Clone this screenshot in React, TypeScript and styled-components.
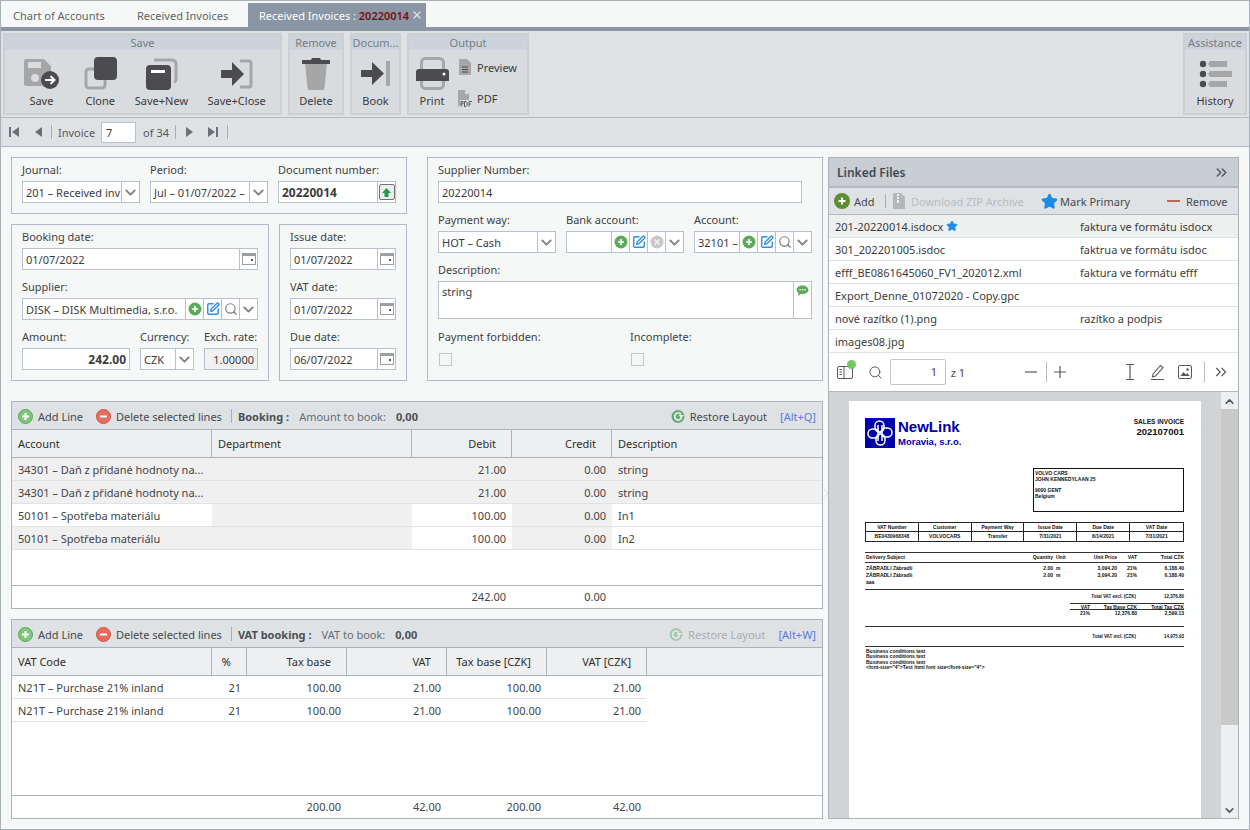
import * as React from 'react';
import styled, { createGlobalStyle } from 'styled-components';
import { ChevronDown, ChevronsRight, Search, SquarePen, Star, X } from 'lucide-react';

const GlobalStyle = createGlobalStyle`
  html, body { margin: 0; padding: 0; background: #f6f8f8; }
  body { font-family: "Noto Sans", "Open Sans", sans-serif; font-size: 11px; color: #3c3c3c; }
  * { box-sizing: border-box; }
`;

/* icons */
const DARK = '#4c4c4e';
const GRAY = '#a6a6a6';

const SaveIcon = () => (
  <svg width="36" height="30" viewBox="0 0 36 30">
    <path d="M3 0h18l7 7v18a2 2 0 0 1-2 2H3a2 2 0 0 1-2-2V2a2 2 0 0 1 2-2z" fill={GRAY} />
    <rect x="5" y="3" width="13" height="6" fill="#d9dcdf" />
    <circle cx="12" cy="19" r="4" fill="#d9dcdf" />
    <circle cx="27" cy="21" r="9" fill={DARK} />
    <path d="M22 21h9M27.500 17l4 4-4 4" fill="none" stroke="#fff" strokeWidth="2" />
  </svg>
);
const CloneIcon = () => (
  <svg width="33" height="33" viewBox="0 0 33 33">
    <rect x="2" y="12" width="19" height="19" rx="3" fill="none" stroke={GRAY} strokeWidth="3" />
    <rect x="10" y="0" width="23" height="23" rx="4" fill={DARK} />
  </svg>
);
const SaveNewIcon = () => (
  <svg width="33" height="33" viewBox="0 0 33 33">
    <path d="M9 3h18a4 4 0 0 1 4 4v15a3 3 0 0 1-2 3" fill="none" stroke={GRAY} strokeWidth="3" />
    <rect x="1" y="8" width="25" height="25" rx="4" fill={DARK} />
    <rect x="6" y="13" width="14" height="3" fill="#fff" />
  </svg>
);
const SaveCloseIcon = () => (
  <svg width="33" height="30" viewBox="0 0 33 30">
    <path d="M20 2h9a2 2 0 0 1 2 2v22a2 2 0 0 1-2 2h-9" fill="none" stroke={GRAY} strokeWidth="3" />
    <path d="M1 11h11V3l12 12-12 12v-8H1z" fill={DARK} />
  </svg>
);
const TrashIcon = () => (
  <svg width="28" height="33" viewBox="0 0 28 33">
    <path d="M3 6h22l-2.500 25a2 2 0 0 1-2 2h-13a2 2 0 0 1-2-2z" fill={GRAY} />
    <path d="M1 3h8l1-2h8l1 2h8a1 1 0 0 1 0 4H1a1 1 0 0 1 0-4z" fill={DARK} />
  </svg>
);
const BookIcon = () => (
  <svg width="29" height="25" viewBox="0 0 29 25">
    <rect x="25" y="0" width="4" height="25" rx="1" fill={GRAY} />
    <path d="M0 9h11V1l12 11.500L11 24v-8H0z" fill={DARK} />
  </svg>
);
const PrintIcon = () => (
  <svg width="33" height="33" viewBox="0 0 33 33">
    <rect x="5.500" y="1.500" width="22" height="30" rx="4" fill="none" stroke={GRAY} strokeWidth="3" />
    <path d="M3 12h27a3 3 0 0 1 3 3v9H0v-9a3 3 0 0 1 3-3z" fill={DARK} />
    <circle cx="28" cy="17" r="1.500" fill="#fff" />
  </svg>
);
const DocIcon = () => (
  <svg width="12" height="16" viewBox="0 0 12 16">
    <path d="M1 0h7l4 4v11a1 1 0 0 1-1 1H1a1 1 0 0 1-1-1V1a1 1 0 0 1 1-1z" fill={GRAY} />
    <path d="M3 8h6M3 10.500h6M3 13h6" stroke={DARK} strokeWidth="1" />
  </svg>
);
const PdfIcon = () => (
  <svg width="16" height="17" viewBox="0 0 16 17">
    <path d="M1 0h7l4 4v12H1z" fill={GRAY} />
    <path d="M8 0v4h4" fill="#d9dcdf" />
    <rect x="3" y="10" width="13" height="7" fill="#d9dcdf" />
    <path d="M4 16.500v-5h2v2.500H4M7.500 11.500v5h1.500l1-1v-3l-1-1zM12 16.500v-5h3M12 14h2" fill="none" stroke={DARK} strokeWidth="0.9" />
  </svg>
);
const HistoryIcon = () => (
  <svg width="33" height="28" viewBox="0 0 33 28">
    <circle cx="4" cy="4" r="3.200" fill={DARK} />
    <circle cx="4" cy="14" r="3.200" fill={DARK} />
    <circle cx="4" cy="24" r="3.200" fill={DARK} />
    <path d="M11 1h17v6H11l-2-3zM11 11h22v6H11l-2-3zM11 21h17v6H11l-2-3z" fill={GRAY} />
  </svg>
);
const First = () => (
  <svg width="12" height="12" viewBox="0 0 12 12"><rect x="1" y="1" width="2" height="10" fill="#6b7076" /><path d="M11 1v10L4 6z" fill="#6b7076" /></svg>
);
const Prev = () => (
  <svg width="12" height="12" viewBox="0 0 12 12"><path d="M9 1v10L2 6z" fill="#6b7076" /></svg>
);
const Next = () => (
  <svg width="12" height="12" viewBox="0 0 12 12"><path d="M3 1v10l7-5z" fill="#6b7076" /></svg>
);
const Last = () => (
  <svg width="12" height="12" viewBox="0 0 12 12"><rect x="9" y="1" width="2" height="10" fill="#6b7076" /><path d="M1 1v10l7-5z" fill="#6b7076" /></svg>
);
const Chevron = () => <ChevronDown size={17} color="#7b8084" strokeWidth={2.6} />;
const AddDot = () => (
  <svg width="14" height="14" viewBox="0 0 14 14">
    <circle cx="7" cy="7" r="6.500" fill="#5cab5c" />
    <path d="M7 4v6M4 7h6" stroke="#fff" strokeWidth="1.600" />
  </svg>
);
const Edit = () => <SquarePen size={14} color="#2f8fe8" strokeWidth={2.4} />;
const Find = () => <Search size={14} color="#777b80" strokeWidth={2} />;
const Clear = () => (
  <svg width="14" height="14" viewBox="0 0 14 14">
    <circle cx="7" cy="7" r="6.500" fill="#c6c8ca" />
    <path d="M4.500 4.500l5 5M9.500 4.500l-5 5" stroke="#f4f4f4" strokeWidth="1.400" />
  </svg>
);
const Calendar = () => (
  <svg width="14" height="12" viewBox="0 0 14 12">
    <rect x="0.500" y="0.500" width="13" height="11" fill="#fff" stroke="#9a9fa4" />
    <rect x="0.500" y="0.500" width="13" height="2.500" fill="#9a9fa4" />
    <rect x="9" y="6" width="2" height="2" fill="#55595d" />
  </svg>
);
const UpArrow = () => (
  <svg width="11" height="11" viewBox="0 0 11 11"><path d="M5.500 1L10 6H7.500v4h-4V6H1z" fill="#1f9d4d" /></svg>
);
const Bubble = () => (
  <svg width="13" height="12" viewBox="0 0 13 12">
    <path d="M6.500 0.500c3.300 0 6 1.900 6 4.300s-2.700 4.300-6 4.300c-.6 0-1.100-.1-1.600-.2L2 11l.5-3C1.300 7.200.5 6.100.5 4.800.5 2.400 3.200.5 6.500.5z" fill="#5cab5c" />
    <circle cx="4" cy="4.800" r=".8" fill="#fff" /><circle cx="6.500" cy="4.800" r=".8" fill="#fff" /><circle cx="9" cy="4.800" r=".8" fill="#fff" />
  </svg>
);
const AddLineIcon = () => (
  <svg width="15" height="15" viewBox="0 0 15 15">
    <circle cx="7.500" cy="7.500" r="7" fill="#7fc77b" stroke="#5fa35c" />
    <path d="M7.500 4v7M4 7.500h7" stroke="#fff" strokeWidth="2" />
  </svg>
);
const DeleteLineIcon = () => (
  <svg width="15" height="15" viewBox="0 0 15 15">
    <circle cx="7.500" cy="7.500" r="7" fill="#ea6a5c" stroke="#cc5648" />
    <path d="M4 7.500h7" stroke="#fff" strokeWidth="2" />
  </svg>
);
const RestoreIcon = ({ faded }: { faded?: boolean }) => (
  <svg width="14" height="15" viewBox="0 0 14 15" opacity={faded ? 0.45 : 1}>
    <circle cx="7" cy="7.500" r="6.500" fill="#69a777" />
    <path d="M10 5.500A3.500 3.500 0 1 0 10.500 8.500" fill="none" stroke="#e9f3ea" strokeWidth="1.700" />
    <path d="M7.500 6H13l-2.800 3.200z" fill="#e9f3ea" />
  </svg>
);
const BigAdd = () => (
  <svg width="16" height="16" viewBox="0 0 16 16">
    <circle cx="8" cy="8" r="8" fill="#5c8f2e" />
    <path d="M8 4.500v7M4.500 8h7" stroke="#fff" strokeWidth="2" />
  </svg>
);
const ZipIcon = () => (
  <svg width="12" height="16" viewBox="0 0 12 16">
    <path d="M1 0h7l4 4v12H0V1z" fill="#b4b7ba" />
    <path d="M4 1h2v2H4zM4 4h2v2H4zM4 7h2v3H4z" fill="#eceeef" />
  </svg>
);
const SidebarIcon = () => (
  <svg width="16" height="13" viewBox="0 0 16 13">
    <rect x="0.500" y="0.500" width="15" height="12" rx="1.500" fill="none" stroke="#55595d" />
    <path d="M7 .5v12M2.500 3.500h2.500M2.500 6h2.500M2.500 8.500h2.500" stroke="#55595d" fill="none" />
  </svg>
);
const IBeam = () => (
  <svg width="10" height="16" viewBox="0 0 10 16">
    <path d="M1 .5h8M1 15.500h8M5 .5v15" stroke="#55595d" strokeWidth="1.200" fill="none" />
  </svg>
);
const PenIcon = () => (
  <svg width="15" height="16" viewBox="0 0 15 16">
    <path d="M3 10L10.500 1.500l2.500 2-7.500 8.500-3 1zM1 15.500h13" fill="none" stroke="#55595d" strokeWidth="1.100" />
  </svg>
);
const ImageIcon = () => (
  <svg width="14" height="14" viewBox="0 0 14 14">
    <rect x="0.500" y="0.500" width="13" height="13" rx="1.500" fill="#fff" stroke="#55595d" />
    <path d="M2.500 11l3-4 2.500 2.500 1.500-1.500 2 3z" fill="#55595d" />
    <circle cx="9.500" cy="4.500" r="1.200" fill="#55595d" />
  </svg>
);
const PlainMinus = () => (
  <svg width="12" height="12" viewBox="0 0 12 12"><path d="M0 6h12" stroke="#55595d" strokeWidth="1.200" /></svg>
);
const PlainPlus = () => (
  <svg width="12" height="12" viewBox="0 0 12 12"><path d="M0 6h12M6 0v12" stroke="#55595d" strokeWidth="1.200" /></svg>
);
const KnotLogo = () => (
  <svg width="30" height="30" viewBox="0 0 30 30">
    <rect width="30" height="30" fill="#0000a8" />
    <g fill="none" stroke="#fff" strokeWidth="1.500">
      <rect x="3" y="11" width="11" height="9" rx="4.500" />
      <rect x="16" y="10" width="11" height="9" rx="4.500" />
      <rect x="10" y="3" width="9" height="11" rx="4.500" />
      <rect x="11" y="16" width="9" height="11" rx="4.500" />
      <path d="M13 7v16M17 7v16" />
    </g>
  </svg>
);

/* page frame */
const Window = styled.div`
  width: 1250px;
  height: 830px;
  border: 1px solid #a9b1b9;
  display: flex;
  flex-direction: column;
  overflow: hidden;
  background: #f6f8f8;
`;

const TabStrip = styled.div`
  height: 26px;
  display: flex;
  align-items: flex-end;
  flex-shrink: 0;
  padding-left: 1px;
`;

const Tab = styled.div<{ $w: number; $active?: boolean }>`
  width: ${p => p.$w}px;
  height: 24px;
  display: flex;
  align-items: center;
  justify-content: space-between;
  padding: 0 3px 0 11px;
  white-space: nowrap;
  color: ${p => (p.$active ? '#fff' : '#5d6469')};
  background: ${p => (p.$active ? '#8a96a3' : 'transparent')};
`;

const TabNumber = styled.span`
  color: #7a0c12;
  font-weight: 600;
`;

const TabRule = styled.div`
  height: 4px;
  flex-shrink: 0;
  background: #8a96a3;
`;

const Ribbon = styled.div`
  height: 87px;
  flex-shrink: 0;
  display: flex;
  gap: 6px;
  padding: 2px 2px 0;
  background: #dfe2e5;
  border-bottom: 1px solid #b5babf;
`;

const Group = styled.section<{ $w: number; $push?: boolean }>`
  width: ${p => p.$w}px;
  height: 82px;
  margin-left: ${p => (p.$push ? 'auto' : '0')};
  border: 2px solid #cdd0d2;
  background: #d9dcdf;
  display: flex;
  flex-direction: column;
`;

const GroupTitle = styled.div`
  height: 15px;
  line-height: 15px;
  flex-shrink: 0;
  text-align: center;
  color: #757c83;
  background: #ccd3da;
  white-space: nowrap;
  overflow: hidden;
`;

const GroupBody = styled.div<{ $pad?: number }>`
  flex: 1;
  display: flex;
  padding-left: ${p => p.$pad ?? 0}px;
`;

const BigButton = styled.div<{ $w: number }>`
  width: ${p => p.$w}px;
  display: flex;
  flex-direction: column;
  align-items: center;
  color: #3a3a3c;
`;

const BigIcon = styled.div`
  height: 39px;
  margin-top: 4px;
  display: flex;
  align-items: center;
  justify-content: center;
`;

const BigLabel = styled.div`
  height: 16px;
  line-height: 16px;
  white-space: nowrap;
`;

const SideStack = styled.div`
  display: flex;
  flex-direction: column;
  gap: 13px;
  padding: 8px 0 0 4px;
`;

const SmallButton = styled.div`
  display: flex;
  align-items: center;
  gap: 4px;
  height: 18px;
  color: #3a3a3c;
`;

const SmallIcon = styled.div`
  width: 16px;
  display: flex;
  justify-content: center;
`;

const NavBar = styled.div`
  height: 29px;
  flex-shrink: 0;
  display: flex;
  align-items: center;
  background: #dfe2e5;
  border-bottom: 1px solid #b0b7be;
  color: #55595d;
`;

const NavIcon = styled.div<{ $w: number }>`
  width: ${p => p.$w}px;
  display: flex;
  justify-content: center;
`;

const NavRule = styled.div<{ $left?: number }>`
  width: 1px;
  height: 14px;
  margin-left: ${p => p.$left ?? 0}px;
  background: #a8aeb4;
`;

const NavInput = styled.div`
  width: 35px;
  height: 21px;
  line-height: 19px;
  margin: 0 7px 0 6px;
  padding-left: 4px;
  background: #fff;
  border: 1px solid #b9c0cb;
  color: #3c3c3c;
`;

const Main = styled.main`
  flex: 1;
  min-height: 0;
  display: flex;
  padding: 10px;
`;

const LeftColumn = styled.div`
  width: 812px;
  display: flex;
  flex-direction: column;
`;

const FormRow = styled.div`
  display: flex;
  gap: 20px;
  margin-bottom: 20px;
`;

const FormStack = styled.div`
  width: 396px;
  display: flex;
  flex-direction: column;
  gap: 10px;
`;

const DateRow = styled.div`
  display: flex;
  gap: 10px;
`;

const Panel = styled.div<{ $w?: number; $cols?: string }>`
  width: ${p => (p.$w ? `${p.$w}px` : 'auto')};
  border: 1px solid #b4b9c8;
  padding: 5px 10px 10px;
  display: grid;
  grid-template-columns: ${p => p.$cols ?? '1fr'};
  gap: 10px;
  align-content: start;
`;

const FieldWrap = styled.div<{ $span?: number; $w?: number }>`
  grid-column: span ${p => p.$span ?? 1};
  width: ${p => (p.$w ? `${p.$w}px` : 'auto')};
  min-width: 0;
`;

const Label = styled.div`
  height: 18px;
  line-height: 14px;
  color: #3f3f3f;
  white-space: nowrap;
`;

const Box = styled.div<{ $h?: number; $w?: number; $gray?: boolean }>`
  height: ${p => p.$h ?? 22}px;
  width: ${p => (p.$w ? `${p.$w}px` : 'auto')};
  display: flex;
  background: ${p => (p.$gray ? '#f0f1f1' : '#fff')};
  border: 1px solid #b9c0cb;
`;

const BoxText = styled.div<{ $bold?: boolean; $right?: boolean; $top?: boolean }>`
  flex: 1;
  min-width: 0;
  padding: ${p => (p.$top ? '1px 3px' : '0 3px')};
  line-height: ${p => (p.$top ? '17px' : '21px')};
  font-size: ${p => (p.$bold ? 12 : 11)}px;
  font-weight: ${p => (p.$bold ? 700 : 400)};
  text-align: ${p => (p.$right ? 'right' : 'left')};
  white-space: nowrap;
  overflow: hidden;
  color: #3c3c3c;
`;

const BoxButton = styled.div<{ $w?: number; $top?: boolean }>`
  width: ${p => p.$w ?? 18}px;
  flex-shrink: 0;
  display: flex;
  justify-content: center;
  align-items: ${p => (p.$top ? 'flex-start' : 'center')};
  padding-top: ${p => (p.$top ? 3 : 0)}px;
  border-left: 1px solid #b9c0cb;
`;

const RaisedKey = styled.div`
  width: 16px;
  height: 16px;
  display: flex;
  align-items: center;
  justify-content: center;
  border: 1px solid #6f7478;
  border-radius: 2px;
  background: #eceeef;
`;

const CheckRow = styled.div`
  display: flex;
  margin-top: 5px;
`;

const CheckBox = styled.div`
  width: 13px;
  height: 13px;
  margin-left: 1px;
  border: 1px solid #c4c7ca;
`;

const FlagRow = styled.div`
  display: flex;
  margin-top: 1px;
`;

/* data grids */
const GridPanel = styled.section<{ $fill?: boolean }>`
  display: flex;
  flex-direction: column;
  height: ${p => (p.$fill ? 'auto' : '208px')};
  flex: ${p => (p.$fill ? 1 : 'none')};
  margin-bottom: ${p => (p.$fill ? 0 : 10)}px;
  border: 1px solid #aab2ba;
  background: #fff;
`;

const GridBar = styled.div`
  height: 28px;
  flex-shrink: 0;
  display: flex;
  align-items: center;
  padding: 1px 6px 0;
  background: #dfe2e5;
  border-bottom: 1px solid #aab2ba;
  color: #46494d;
`;

const BarAction = styled.div<{ $gap?: number; $faded?: boolean }>`
  display: flex;
  align-items: center;
  gap: 5px;
  margin-right: ${p => p.$gap ?? 0}px;
  white-space: nowrap;
  color: ${p => (p.$faded ? '#a9adb2' : '#46494d')};
`;

const BarRule = styled.div`
  width: 1px;
  height: 14px;
  margin: 0 6px 0 9px;
  background: #a8aeb4;
`;

const BarBold = styled.b<{ $gap: number }>`
  margin-right: ${p => p.$gap}px;
  font-weight: 700;
  color: #4c5054;
  white-space: nowrap;
`;

const BarMuted = styled.span`
  margin-right: 10px;
  color: #686c70;
  white-space: nowrap;
`;

const BarPush = styled.div`
  flex: 1;
`;

const Shortcut = styled.span`
  margin-left: 13px;
  color: #5a78e0;
  white-space: nowrap;
`;

const HeaderRow = styled.div`
  height: 28px;
  flex-shrink: 0;
  display: flex;
  background: #eeeff1;
  border-bottom: 1px solid #aab2ba;
`;

const HeaderCell = styled.div<{ $w?: number; $right?: boolean }>`
  width: ${p => (p.$w ? `${p.$w}px` : 'auto')};
  flex: ${p => (p.$w ? 'none' : 1)};
  line-height: 28px;
  padding: ${p => (p.$right ? '0 15px 0 6px' : '0 6px')};
  text-align: ${p => (p.$right ? 'right' : 'left')};
  color: #2e2e2e;
  border-right: ${p => (p.$w ? '1px solid #aab2ba' : 'none')};
  white-space: nowrap;
`;

const DataRow = styled.div<{ $w?: number }>`
  height: 23px;
  flex-shrink: 0;
  width: ${p => (p.$w ? `${p.$w}px` : 'auto')};
  display: flex;
  border-bottom: 1px solid #e0e2e6;
`;

const DataCell = styled.div<{ $w?: number; $right?: boolean; $shade?: boolean }>`
  width: ${p => (p.$w ? `${p.$w}px` : 'auto')};
  flex: ${p => (p.$w ? 'none' : 1)};
  line-height: 23px;
  padding: 0 6px;
  text-align: ${p => (p.$right ? 'right' : 'left')};
  background: ${p => (p.$shade ? '#f0f0f1' : 'transparent')};
  color: #444;
  white-space: nowrap;
  overflow: hidden;
`;

const GridSpace = styled.div`
  flex: 1;
`;

const FooterRow = styled.div`
  height: 23px;
  flex-shrink: 0;
  display: flex;
  border-top: 1px solid #aab2ba;
`;

const FooterCell = styled(DataCell)`
  line-height: 22px;
`;

const Splitter = styled.div`
  width: 5px;
  flex-shrink: 0;
  display: flex;
  align-items: flex-start;
  justify-content: center;
  padding-top: 332px;
  color: #dfe2e5;
`;

/* linked files */
const FilesPanel = styled.aside`
  width: 411px;
  display: flex;
  flex-direction: column;
  border: 1px solid #aab2ba;
  background: #fff;
`;

const FilesHeader = styled.div`
  height: 30px;
  flex-shrink: 0;
  display: flex;
  align-items: center;
  justify-content: space-between;
  padding: 0 8px;
  background: #c9ced2;
  border-bottom: 2px solid #b2b8bd;
  font-size: 12px;
  font-weight: 600;
  color: #3f4a55;
`;

const FilesBar = styled.div`
  height: 27px;
  flex-shrink: 0;
  display: flex;
  align-items: center;
  padding: 0 5px;
  background: #dfe2e5;
  border-bottom: 1px solid #b2b8bd;
  color: #46494d;
`;

const FilesAction = styled.div<{ $w: number; $faded?: boolean; $gap?: number }>`
  width: ${p => p.$w}px;
  flex-shrink: 0;
  display: flex;
  align-items: center;
  gap: ${p => p.$gap ?? 4}px;
  white-space: nowrap;
  color: ${p => (p.$faded ? '#b8bcc0' : '#46494d')};
`;

const BarRuleSmall = styled.div`
  width: 1px;
  height: 14px;
  margin-right: 7px;
  flex-shrink: 0;
  background: #a8aeb4;
`;

const RemoveDash = styled.div`
  width: 13px;
  height: 2px;
  margin-right: 2px;
  background: #c0654f;
`;

const FileRow = styled.div<{ $selected?: boolean }>`
  height: 23px;
  flex-shrink: 0;
  display: flex;
  align-items: center;
  padding-left: 6px;
  border-bottom: 1px solid #dfe2e6;
  background: ${p => (p.$selected ? '#eef0f0' : '#fff')};
  color: #3c3c3c;
`;

const FileName = styled.div`
  width: 245px;
  display: flex;
  align-items: center;
  gap: 3px;
  white-space: nowrap;
`;

const PdfBar = styled.div`
  height: 39px;
  flex-shrink: 0;
  display: flex;
  align-items: center;
  padding-left: 8px;
  border-bottom: 1px solid #b2b8bd;
  color: #46494d;
`;

const PdfTool = styled.div<{ $w: number }>`
  position: relative;
  width: ${p => p.$w}px;
  flex-shrink: 0;
  display: flex;
  justify-content: center;
  align-items: center;
`;

const GreenDot = styled.div`
  position: absolute;
  top: -6px;
  right: -3px;
  width: 9px;
  height: 9px;
  border-radius: 50%;
  background: #72c960;
`;

const PdfInput = styled.div`
  width: 56px;
  height: 26px;
  line-height: 24px;
  padding-right: 8px;
  text-align: right;
  border: 1px solid #c4c7ca;
  border-radius: 2px;
`;

const PdfRule = styled.div`
  width: 1px;
  height: 20px;
  flex-shrink: 0;
  background: #b9bdc1;
`;

const Viewer = styled.div`
  flex: 1;
  min-height: 0;
  display: flex;
  overflow: hidden;
`;

const ViewerCanvas = styled.div`
  flex: 1;
  min-width: 0;
  padding: 9px 0 0 20px;
  background: #d2d3d5;
  overflow: hidden;
`;

const ScrollBar = styled.div`
  width: 17px;
  flex-shrink: 0;
  display: flex;
  flex-direction: column;
  background: #eeeff0;
`;

const ScrollEnd = styled.div<{ $grow?: boolean }>`
  height: ${p => (p.$grow ? 'auto' : '17px')};
  flex: ${p => (p.$grow ? 1 : 'none')};
  display: flex;
  align-items: flex-end;
  justify-content: center;
  color: #55595d;
  padding-bottom: 1px;
`;

const ScrollThumb = styled.div`
  height: 316px;
  flex-shrink: 0;
  background: #c9c9c9;
`;

/* the invoice inside the viewer */
const Sheet = styled.div`
  width: 352px;
  height: 640px;
  padding: 17px 17px 0 16px;
  background: #fff;
  font-family: "Liberation Sans", Arial, sans-serif;
  font-size: 5px;
  font-weight: 700;
  color: #111;
  line-height: 7px;
`;

const SheetHead = styled.div`
  height: 30px;
  display: flex;
`;

const BrandText = styled.div`
  margin-left: 3px;
  color: #0000a8;
  font-size: 9.500px;
  line-height: 11px;
  font-weight: 700;
`;

const BrandName = styled.div`
  font-size: 15px;
  line-height: 18px;
`;

const SheetTitle = styled.div`
  margin-left: auto;
  text-align: right;
  font-size: 6.500px;
  line-height: 8px;
`;

const SheetNumber = styled.div`
  font-size: 9.500px;
  line-height: 11px;
`;

const AddressBox = styled.div`
  width: 151px;
  height: 44px;
  margin: 20px 0 10px auto;
  padding: 1px 1px;
  border: 1px solid #111;
  line-height: 6px;
`;

const AddressGap = styled.div`
  height: 5px;
`;

const InfoGrid = styled.div`
  display: grid;
  grid-template-columns: repeat(6, 1fr);
  margin-bottom: 10px;
  border: 1px solid #222;
`;

const InfoCell = styled.div`
  height: 9px;
  line-height: 8px;
  text-align: center;
  border-right: 1px solid #222;
  border-bottom: 1px solid #222;
  &:nth-child(6n) { border-right: none; }
  &:nth-child(n + 7) { border-bottom: none; }
`;

const LineGrid = styled.div<{ $head?: boolean }>`
  display: grid;
  grid-template-columns: 120px 68px 30px 34px 20px 47px;
  height: ${p => (p.$head ? '11px' : '7px')};
  line-height: ${p => (p.$head ? '9px' : '7px')};
  border-top: ${p => (p.$head ? '1px solid #333' : 'none')};
  border-bottom: ${p => (p.$head ? '1px solid #333' : 'none')};
  margin-bottom: ${p => (p.$head ? '2px' : '0')};
`;

const LineCell = styled.div<{ $right?: boolean; $pad?: boolean }>`
  text-align: ${p => (p.$right ? 'right' : 'left')};
  padding-left: ${p => (p.$pad ? 3 : 1)}px;
  white-space: nowrap;
`;

const SheetRule = styled.div<{ $top?: number }>`
  height: 1px;
  margin-top: ${p => p.$top ?? 0}px;
  background: #333;
`;

const TotalRow = styled.div<{ $h: number }>`
  height: ${p => p.$h}px;
  line-height: ${p => p.$h}px;
  display: flex;
  justify-content: flex-end;
  font-size: 4.500px;
`;

const TotalValue = styled.div`
  width: 48px;
  text-align: right;
`;

const TaxGrid = styled.div<{ $head?: boolean }>`
  width: 114px;
  margin-left: auto;
  display: grid;
  grid-template-columns: 20px 47px 47px;
  height: ${p => (p.$head ? '7px' : '6px')};
  line-height: 6px;
  text-align: right;
  border-top: ${p => (p.$head ? '1px solid #333' : 'none')};
  border-bottom: ${p => (p.$head ? '1px solid #333' : 'none')};
`;

const Conditions = styled.div`
  margin-top: 2px;
  padding-left: 1px;
  line-height: 5.400px;
`;

/* data */
const bookingCols = [200, 200, 100, 100];
const bookingRows = [
  { account: '34301 – Daň z přidané hodnoty na...', debit: '21.00', text: 'string', shade: [1, 1, 1, 1, 1] },
  { account: '34301 – Daň z přidané hodnoty na...', debit: '21.00', text: 'string', shade: [1, 1, 1, 1, 1] },
  { account: '50101 – Spotřeba materiálu', debit: '100.00', text: 'In1', shade: [0, 1, 0, 1, 0] },
  { account: '50101 – Spotřeba materiálu', debit: '100.00', text: 'In2', shade: [1, 1, 0, 1, 0] },
];
const files = [
  { name: '201-20220014.isdocx', note: 'faktura ve formátu isdocx', primary: true },
  { name: '301_202201005.isdoc', note: 'faktrua ve formátu isdoc' },
  { name: 'efff_BE0861645060_FV1_202012.xml', note: 'faktura ve formátu efff' },
  { name: 'Export_Denne_01072020 - Copy.gpc', note: '' },
  { name: 'nové razítko (1).png', note: 'razítko a podpis' },
  { name: 'images08.jpg', note: '' },
];
const infoCells = [
  'VAT Number', 'Customer', 'Payment Way', 'Issue Date', 'Due Date', 'VAT Date',
  'BE0430968348', 'VOLVOCARS', 'Transfer', '7/31/2021', '8/14/2021', '7/31/2021',
];

const DateField = ({ label, value }: { label: string; value: string }) => (
  <FieldWrap>
    <Label>{label}</Label>
    <Box>
      <BoxText>{value}</BoxText>
      <BoxButton><Calendar /></BoxButton>
    </Box>
  </FieldWrap>
);

const ComboField = ({ label, value }: { label: string; value: string }) => (
  <FieldWrap>
    <Label>{label}</Label>
    <Box>
      <BoxText>{value}</BoxText>
      <BoxButton><Chevron /></BoxButton>
    </Box>
  </FieldWrap>
);

const ForeignField = ({ label, value, middle }: { label: string; value: string; middle: React.ReactNode }) => (
  <FieldWrap>
    <Label>{label}</Label>
    <Box>
      <BoxText>{value}</BoxText>
      <BoxButton><AddDot /></BoxButton>
      <BoxButton><Edit /></BoxButton>
      <BoxButton>{middle}</BoxButton>
      <BoxButton><Chevron /></BoxButton>
    </Box>
  </FieldWrap>
);

const GridToolbar = ({ title, muted, shortcut, faded }: { title: string; muted: string; shortcut: string; faded?: boolean }) => (
  <GridBar>
    <BarAction $gap={13}><AddLineIcon />Add Line</BarAction>
    <BarAction><DeleteLineIcon />Delete selected lines</BarAction>
    <BarRule />
    <BarBold $gap={10}>{title}</BarBold>
    <BarMuted>{muted}</BarMuted>
    <BarBold $gap={0}>0,00</BarBold>
    <BarPush />
    <BarAction $faded={faded}><RestoreIcon faded={faded} />Restore Layout</BarAction>
    <Shortcut>{shortcut}</Shortcut>
  </GridBar>
);

const App: React.FC = () => (
  <>
    <GlobalStyle />
    <Window>
      <TabStrip>
        <Tab $w={124}>Chart of Accounts<X size={11} color="#fcfdfd" /></Tab>
        <Tab $w={122}>Received Invoices<X size={11} color="#fcfdfd" /></Tab>
        <Tab $w={178} $active>
          <span>Received Invoices : <TabNumber>20220014</TabNumber></span>
          <X size={12} color="#dfe3e7" strokeWidth={2.4} />
        </Tab>
      </TabStrip>
      <TabRule />

      <Ribbon>
        <Group $w={279}>
          <GroupTitle>Save</GroupTitle>
          <GroupBody $pad={7}>
            <BigButton $w={59}><BigIcon><SaveIcon /></BigIcon><BigLabel>Save</BigLabel></BigButton>
            <BigButton $w={59}><BigIcon><CloneIcon /></BigIcon><BigLabel>Clone</BigLabel></BigButton>
            <BigButton $w={64}><BigIcon><SaveNewIcon /></BigIcon><BigLabel>Save+New</BigLabel></BigButton>
            <BigButton $w={87}><BigIcon><SaveCloseIcon /></BigIcon><BigLabel>Save+Close</BigLabel></BigButton>
          </GroupBody>
        </Group>
        <Group $w={56}>
          <GroupTitle>Remove</GroupTitle>
          <GroupBody><BigButton $w={52}><BigIcon><TrashIcon /></BigIcon><BigLabel>Delete</BigLabel></BigButton></GroupBody>
        </Group>
        <Group $w={51}>
          <GroupTitle>Docum...</GroupTitle>
          <GroupBody><BigButton $w={47}><BigIcon><BookIcon /></BigIcon><BigLabel>Book</BigLabel></BigButton></GroupBody>
        </Group>
        <Group $w={122}>
          <GroupTitle>Output</GroupTitle>
          <GroupBody $pad={2}>
            <BigButton $w={42}><BigIcon><PrintIcon /></BigIcon><BigLabel>Print</BigLabel></BigButton>
            <SideStack>
              <SmallButton><SmallIcon><DocIcon /></SmallIcon>Preview</SmallButton>
              <SmallButton><SmallIcon><PdfIcon /></SmallIcon>PDF</SmallButton>
            </SideStack>
          </GroupBody>
        </Group>
        <Group $w={64} $push>
          <GroupTitle>Assistance</GroupTitle>
          <GroupBody><BigButton $w={60}><BigIcon><HistoryIcon /></BigIcon><BigLabel>History</BigLabel></BigButton></GroupBody>
        </Group>
      </Ribbon>

      <NavBar>
        <NavIcon $w={26}><First /></NavIcon>
        <NavIcon $w={24}><Prev /></NavIcon>
        <NavRule />
        <NavIcon $w={6} />
        Invoice
        <NavInput>7</NavInput>
        of 34
        <NavRule $left={6} />
        <NavIcon $w={26}><Next /></NavIcon>
        <NavIcon $w={22}><Last /></NavIcon>
        <NavRule $left={3} />
      </NavBar>

      <Main>
        <LeftColumn>
          <FormRow>
            <FormStack>
              <Panel $cols="118px 118px 118px">
                <ComboField label="Journal:" value="201 – Received inv" />
                <ComboField label="Period:" value="Jul – 01/07/2022 –" />
                <FieldWrap>
                  <Label>Document number:</Label>
                  <Box>
                    <BoxText $bold>20220014</BoxText>
                    <BoxButton><RaisedKey><UpArrow /></RaisedKey></BoxButton>
                  </Box>
                </FieldWrap>
              </Panel>
              <DateRow>
                <Panel $w={258} $cols="108px 54px 54px">
                  <FieldWrap $span={3}>
                    <Label>Booking date:</Label>
                    <Box>
                      <BoxText>01/07/2022</BoxText>
                      <BoxButton><Calendar /></BoxButton>
                    </Box>
                  </FieldWrap>
                  <FieldWrap $span={3}>
                    <Label>Supplier:</Label>
                    <Box>
                      <BoxText>DISK – DISK Multimedia, s.r.o.</BoxText>
                      <BoxButton><AddDot /></BoxButton>
                      <BoxButton><Edit /></BoxButton>
                      <BoxButton><Find /></BoxButton>
                      <BoxButton><Chevron /></BoxButton>
                    </Box>
                  </FieldWrap>
                  <FieldWrap>
                    <Label>Amount:</Label>
                    <Box><BoxText $bold $right>242.00</BoxText></Box>
                  </FieldWrap>
                  <ComboField label="Currency:" value="CZK" />
                  <FieldWrap>
                    <Label>Exch. rate:</Label>
                    <Box $gray><BoxText $right>1.00000</BoxText></Box>
                  </FieldWrap>
                </Panel>
                <Panel $w={128}>
                  <DateField label="Issue date:" value="01/07/2022" />
                  <DateField label="VAT date:" value="01/07/2022" />
                  <DateField label="Due date:" value="06/07/2022" />
                </Panel>
              </DateRow>
            </FormStack>

            <Panel $w={396} $cols="118px 118px 118px">
              <FieldWrap $span={3}>
                <Label>Supplier Number:</Label>
                <Box $w={364}><BoxText>20220014</BoxText></Box>
              </FieldWrap>
              <ComboField label="Payment way:" value="HOT – Cash" />
              <ForeignField label="Bank account:" value="" middle={<Clear />} />
              <ForeignField label="Account:" value="32101 –" middle={<Find />} />
              <FieldWrap $span={3}>
                <Label>Description:</Label>
                <Box $h={38}>
                  <BoxText $top>string</BoxText>
                  <BoxButton $top><Bubble /></BoxButton>
                </Box>
              </FieldWrap>
              <FieldWrap $span={3}>
                <FlagRow>
                  <FieldWrap $w={192}>
                    <Label>Payment forbidden:</Label>
                    <CheckRow><CheckBox /></CheckRow>
                  </FieldWrap>
                  <FieldWrap>
                    <Label>Incomplete:</Label>
                    <CheckRow><CheckBox /></CheckRow>
                  </FieldWrap>
                </FlagRow>
              </FieldWrap>
            </Panel>
          </FormRow>

          <GridPanel>
            <GridToolbar title="Booking :" muted="Amount to book:" shortcut="[Alt+Q]" />
            <HeaderRow>
              <HeaderCell $w={200}>Account</HeaderCell>
              <HeaderCell $w={200}>Department</HeaderCell>
              <HeaderCell $w={100} $right>Debit</HeaderCell>
              <HeaderCell $w={100} $right>Credit</HeaderCell>
              <HeaderCell>Description</HeaderCell>
            </HeaderRow>
            {bookingRows.map((row, i) => (
              <DataRow key={i}>
                <DataCell $w={bookingCols[0]} $shade={!!row.shade[0]}>{row.account}</DataCell>
                <DataCell $w={bookingCols[1]} $shade={!!row.shade[1]} />
                <DataCell $w={bookingCols[2]} $right $shade={!!row.shade[2]}>{row.debit}</DataCell>
                <DataCell $w={bookingCols[3]} $right $shade={!!row.shade[3]}>0.00</DataCell>
                <DataCell $shade={!!row.shade[4]}>{row.text}</DataCell>
              </DataRow>
            ))}
            <GridSpace />
            <FooterRow>
              <FooterCell $w={400} />
              <FooterCell $w={100} $right>242.00</FooterCell>
              <FooterCell $w={100} $right>0.00</FooterCell>
            </FooterRow>
          </GridPanel>

          <GridPanel $fill>
            <GridToolbar title="VAT booking :" muted="VAT to book:" shortcut="[Alt+W]" faded />
            <HeaderRow>
              <HeaderCell $w={200}>VAT Code</HeaderCell>
              <HeaderCell $w={35} $right>%</HeaderCell>
              <HeaderCell $w={100} $right>Tax base</HeaderCell>
              <HeaderCell $w={100} $right>VAT</HeaderCell>
              <HeaderCell $w={100} $right>Tax base [CZK]</HeaderCell>
              <HeaderCell $w={100} $right>VAT [CZK]</HeaderCell>
            </HeaderRow>
            {[0, 1].map(i => (
              <DataRow key={i} $w={635}>
                <DataCell $w={200}>N21T – Purchase 21% inland</DataCell>
                <DataCell $w={35} $right>21</DataCell>
                <DataCell $w={100} $right>100.00</DataCell>
                <DataCell $w={100} $right>21.00</DataCell>
                <DataCell $w={100} $right>100.00</DataCell>
                <DataCell $w={100} $right>21.00</DataCell>
              </DataRow>
            ))}
            <GridSpace />
            <FooterRow>
              <FooterCell $w={235} />
              <FooterCell $w={100} $right>200.00</FooterCell>
              <FooterCell $w={100} $right>42.00</FooterCell>
              <FooterCell $w={100} $right>200.00</FooterCell>
              <FooterCell $w={100} $right>42.00</FooterCell>
            </FooterRow>
          </GridPanel>
        </LeftColumn>

        <Splitter>
          <svg width="4" height="8" viewBox="0 0 4 8"><path d="M0 0l4 4-4 4" fill="none" stroke="currentColor" /></svg>
        </Splitter>

        <FilesPanel>
          <FilesHeader>
            Linked Files
            <ChevronsRight size={17} color="#55595d" strokeWidth={2.2} />
          </FilesHeader>
          <FilesBar>
            <FilesAction $w={51}><BigAdd />Add</FilesAction>
            <BarRuleSmall />
            <FilesAction $w={148} $faded $gap={6}><ZipIcon />Download ZIP Archive</FilesAction>
            <FilesAction $w={126} $gap={2}><Star size={17} color="#1e8be6" fill="#1e8be6" />Mark Primary</FilesAction>
            <FilesAction $w={65} $gap={4}><RemoveDash />Remove</FilesAction>
          </FilesBar>
          {files.map(file => (
            <FileRow key={file.name} $selected={file.primary}>
              <FileName>
                {file.name}
                {file.primary && <Star size={12} color="#1e8be6" fill="#1e8be6" />}
              </FileName>
              {file.note}
            </FileRow>
          ))}
          <PdfBar>
            <PdfTool $w={16}><SidebarIcon /><GreenDot /></PdfTool>
            <PdfTool $w={8} />
            <PdfTool $w={29}><Search size={15} color="#55595d" strokeWidth={1.6} /></PdfTool>
            <PdfInput>1</PdfInput>
            <PdfTool $w={24}>z 1</PdfTool>
            <PdfTool $w={46} />
            <PdfTool $w={30}><PlainMinus /></PdfTool>
            <PdfRule />
            <PdfTool $w={26}><PlainPlus /></PdfTool>
            <PdfTool $w={45} />
            <PdfTool $w={24}><IBeam /></PdfTool>
            <PdfTool $w={30}><PenIcon /></PdfTool>
            <PdfTool $w={26}><ImageIcon /></PdfTool>
            <PdfTool $w={6} />
            <PdfRule />
            <PdfTool $w={32}><ChevronsRight size={18} color="#55595d" strokeWidth={1.5} /></PdfTool>
          </PdfBar>
          <Viewer>
            <ViewerCanvas>
              <Sheet>
                <SheetHead>
                  <KnotLogo />
                  <BrandText>
                    <BrandName>NewLink</BrandName>
                    Moravia, s.r.o.
                  </BrandText>
                  <SheetTitle>
                    SALES INVOICE
                    <SheetNumber>202107001</SheetNumber>
                  </SheetTitle>
                </SheetHead>
                <AddressBox>
                  VOLVO CARS<br />
                  JOHN KENNEDYLAAN 25
                  <AddressGap />
                  9000 GENT<br />
                  Belgium
                </AddressBox>
                <InfoGrid>
                  {infoCells.map((cell, i) => <InfoCell key={i}>{cell}</InfoCell>)}
                </InfoGrid>
                <LineGrid $head>
                  <LineCell>Delivery Subject</LineCell>
                  <LineCell $right>Quantity</LineCell>
                  <LineCell $pad>Unit</LineCell>
                  <LineCell $right>Unit Price</LineCell>
                  <LineCell $right>VAT</LineCell>
                  <LineCell $right>Total CZK</LineCell>
                </LineGrid>
                {[0, 1].map(i => (
                  <LineGrid key={i}>
                    <LineCell>ZÁBRADLI  Zábradlí</LineCell>
                    <LineCell $right>2.00</LineCell>
                    <LineCell $pad>m</LineCell>
                    <LineCell $right>3,094.20</LineCell>
                    <LineCell $right>21%</LineCell>
                    <LineCell $right>6,188.40</LineCell>
                  </LineGrid>
                ))}
                <LineGrid><LineCell>aaa</LineCell></LineGrid>
                <SheetRule $top={3} />
                <TotalRow $h={13}>Total VAT excl. (CZK)<TotalValue>12,376.80</TotalValue></TotalRow>
                <TaxGrid $head><div>VAT</div><div>Tax Base CZK</div><div>Total Tax CZK</div></TaxGrid>
                <TaxGrid><div>21%</div><div>12,376.80</div><div>2,599.13</div></TaxGrid>
                <SheetRule $top={10} />
                <TotalRow $h={19}>Total VAT incl. (CZK)<TotalValue>14,975.93</TotalValue></TotalRow>
                <SheetRule />
                <Conditions>
                  Business conditions text<br />
                  Business conditions text<br />
                  Business conditions text<br />
                  {'<font-size="4">Test html font size</font-size="4">'}
                </Conditions>
              </Sheet>
            </ViewerCanvas>
            <ScrollBar>
              <ScrollEnd><ChevronDown size={13} strokeWidth={3} style={{ transform: 'rotate(180deg)' }} /></ScrollEnd>
              <ScrollThumb />
              <ScrollEnd $grow><ChevronDown size={13} strokeWidth={3} /></ScrollEnd>
            </ScrollBar>
          </Viewer>
        </FilesPanel>
      </Main>
    </Window>
  </>
);

export default App;
